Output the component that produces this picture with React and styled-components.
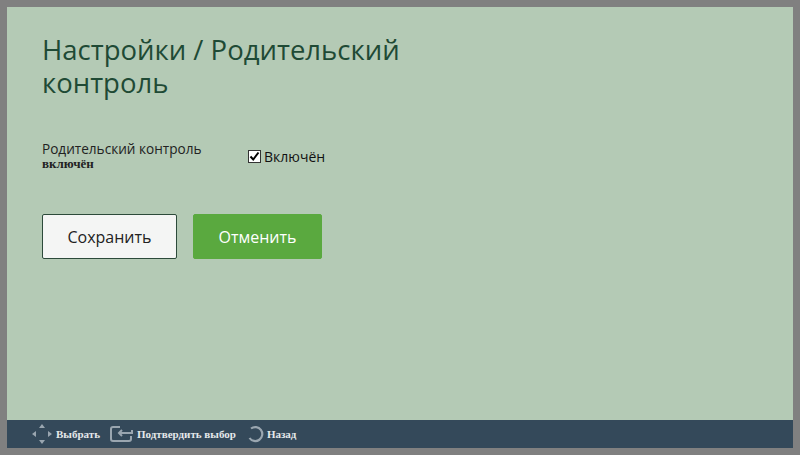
import React from 'react';
import styled, { createGlobalStyle } from 'styled-components';

const Global = createGlobalStyle`
  html, body { margin: 0; padding: 0; background: #808080; }
  body { width: 800px; height: 455px; overflow: hidden; }
`;

export default function App() {
  return (
    <>
      <Global />
      <Frame>
        <Screen>
          <Title>Настройки / Родительский контроль</Title>
          <Row>
            <Label>
              Родительский контроль
              <State>включён</State>
            </Label>
            <Check>
              <Box>
                <svg width="11" height="11" viewBox="0 0 11 11" fill="none" stroke="#000" strokeWidth="2">
                  <path d="M1.5 5.5 L4.2 8.5 L9.5 1.5" />
                </svg>
              </Box>
              Включён
            </Check>
          </Row>
          <Buttons>
            <Button>Сохранить</Button>
            <Button primary>Отменить</Button>
          </Buttons>
        </Screen>
        <Footer>
          <Hint>
            <svg width="22" height="22" viewBox="0 0 22 22" fill="#9aa6b0">
              <path d="M11 1 L14 5 H8 Z M11 21 L8 17 H14 Z M1 11 L5 8 V14 Z M21 11 L17 14 V8 Z" />
            </svg>
            Выбрать
          </Hint>
          <Hint>
            <svg width="24" height="18" viewBox="0 0 24 18" fill="none" stroke="#9aa6b0" strokeWidth="2">
              <path d="M10 2 H3 a2 2 0 0 0 -2 2 V14 a2 2 0 0 0 2 2 H19 a2 2 0 0 0 2 -2 V11" />
              <path d="M22 5 V8 H9 M12 5 L9 8 L12 11" />
            </svg>
            Подтвердить выбор
          </Hint>
          <Hint>
            <svg width="18" height="18" viewBox="0 0 18 18" fill="none" stroke="#9aa6b0" strokeWidth="2.2">
              <path d="M5 3.5 A7 7 0 1 1 3.5 13" />
            </svg>
            Назад
          </Hint>
        </Footer>
      </Frame>
    </>
  );
}

const Frame = styled.div`
  margin: 7px;
  width: 786px;
  height: 441px;
  display: flex;
  flex-direction: column;
`;

const Screen = styled.div`
  flex: 1;
  background: #b4cab5;
  padding: 26px 35px 0;
  display: flex;
  flex-direction: column;
`;

const Title = styled.h1`
  margin: 0;
  width: 380px;
  font-family: 'Open Sans', 'Noto Sans', sans-serif;
  font-weight: 400;
  font-size: 27.5px;
  line-height: 33px;
  color: #1f4a35;
`;

const Row = styled.div`
  display: flex;
  align-items: center;
  margin-top: 42px;
`;

const Label = styled.div`
  width: 206px;
  font-family: 'Open Sans', 'Noto Sans', sans-serif;
  font-size: 13.6px;
  line-height: 16px;
  color: #222;
`;

const State = styled.div`
  font-family: 'Liberation Serif', serif;
  font-weight: bold;
  font-size: 13px;
  line-height: 14px;
`;

const Check = styled.div`
  display: flex;
  align-items: center;
  gap: 3px;
  font-family: 'Open Sans', 'Noto Sans', sans-serif;
  font-size: 14px;
  color: #111;
`;

const Box = styled.span`
  width: 11px;
  height: 11px;
  border: 1px solid #333;
  background: #fff;
  display: flex;
  align-items: center;
  justify-content: center;
`;

const Buttons = styled.div`
  display: flex;
  gap: 16px;
  margin-top: 43px;
`;

const Button = styled.button`
  width: ${(p) => (p.primary ? '129px' : '135px')};
  height: 45px;
  border-radius: 2px;
  border: ${(p) => (p.primary ? '1px solid #5aa93f' : '1px solid #2c4a3a')};
  background: ${(p) => (p.primary ? '#5aa93f' : '#f4f5f4')};
  color: ${(p) => (p.primary ? '#fff' : '#222')};
  font-family: 'Open Sans', 'Noto Sans', sans-serif;
  font-size: 16px;
`;

const Footer = styled.div`
  height: 28px;
  background: #34495a;
  display: flex;
  align-items: center;
  gap: 10px;
  padding-left: 24px;
`;

const Hint = styled.div`
  display: flex;
  align-items: center;
  gap: 3px;
  font-family: 'Liberation Serif', serif;
  font-weight: bold;
  font-size: 11px;
  color: #e4e8ea;
`;
